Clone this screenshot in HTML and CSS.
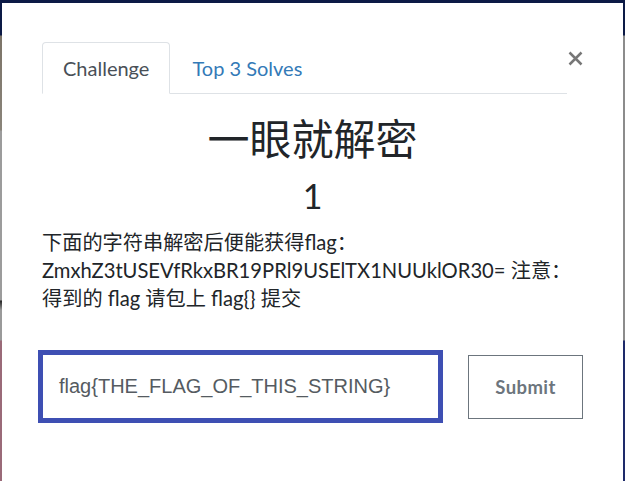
FILE: index.html
```html
<!DOCTYPE html>
<html lang="zh">
<head>
<meta charset="utf-8">
<title>Challenge</title>
<link rel="stylesheet" href="styles.css">
</head>
<body>
<div class="backdrop">
  <div class="modal">
    <div class="modal-body">
      <div class="tab-row">
        <ul class="nav-tabs">
          <li class="tab active">Challenge</li>
          <li class="tab link">Top 3 Solves</li>
        </ul>
        <button class="close" aria-label="Close">
          <svg width="15" height="15" viewBox="0 0 15 15"><path d="M1.5 1.5 L13.5 13.5 M13.5 1.5 L1.5 13.5" stroke="#777" stroke-width="2.5" stroke-linecap="butt"/></svg>
        </button>
      </div>
      <h2 class="name">一眼就解密</h2>
      <h3 class="value">1</h3>
      <div class="desc">下面的字符串解密后便能获得flag：<br>ZmxhZ3tUSEVfRkxBR19PRl9USElTX1NUUklOR30= 注意：<br>得到的 flag 请包上 flag{} 提交</div>
      <div class="submit-row">
        <div class="answer">flag{THE_FLAG_OF_THIS_STRING}</div>
        <button class="submit">Submit</button>
      </div>
    </div>
  </div>
</div>
</body>
</html>
```
FILE: styles.css
```css
html, body {
  margin: 0;
  padding: 0;
  height: 100%;
}
body {
  background: #0d1a45;
  font-family: "Lato", "Noto Sans CJK SC", sans-serif;
  overflow: hidden;
}
.backdrop {
  height: 100%;
  box-sizing: border-box;
  padding: 3px 2px 0 2px;
  background:
    linear-gradient(to bottom, #0c1a46 0, #0c1a46 35px, #7c7468 36px, #8a847a 130px, #9c9c9c 131px, #9c9c9c 300px, #262626 301px, #9a9a9a 310px, #9a9a9a 340px, #9a6a78 341px, #9a6a78 481px) left top / 2px 100% no-repeat,
    linear-gradient(to bottom, #0c1a46 0, #0c1a46 35px, #8c8c8c 36px, #8c8c8c 340px, #1e2a6a 341px, #1e2a6a 481px) right top / 2px 100% no-repeat,
    #0c1a46;
}
.modal {
  background: #fff;
  height: 100%;
}
.modal-body {
  padding: 39px 40px 0 40px;
}
.tab-row {
  display: flex;
  align-items: flex-start;
}
.nav-tabs {
  list-style: none;
  margin: 0;
  padding: 0;
  display: flex;
  width: 527px;
  border-bottom: 1px solid #dee2e6;
}
.tab {
  font-size: 20px;
  line-height: 50px;
  padding: 0 20px;
  border: 1px solid transparent;
  border-top-left-radius: 4px;
  border-top-right-radius: 4px;
  margin-bottom: -1px;
}
.tab.active {
  color: #495057;
  border-color: #dee2e6 #dee2e6 #fff;
  background: #fff;
}
.tab.link {
  color: #337ab7;
  padding-left: 21px;
}
.close {
  background: none;
  border: 0;
  padding: 0;
  margin: 9px 0 0 1px;
  width: 15px;
  height: 15px;
  display: flex;
}
.name {
  margin: 20px 0 0 0;
  text-align: center;
  font-size: 42px;
  line-height: 50px;
  font-weight: 400;
  color: #212529;
}
.value {
  margin: 12px 0 0 0;
  text-align: center;
  font-size: 34px;
  line-height: 40px;
  font-weight: 400;
  color: #212529;
}
.desc {
  margin-top: 12px;
  font-size: 20.2px;
  line-height: 28px;
  color: #212529;
}
.submit-row {
  display: flex;
  align-items: center;
  justify-content: space-between;
  margin-top: 38px;
  width: 545px;
  margin-left: -4px;
}
.answer {
  box-sizing: border-box;
  width: 405px;
  height: 73px;
  border: 5px solid #3e4fb3;
  padding: 0 16px;
  display: flex;
  align-items: center;
  font-family: "Liberation Sans", Arial, sans-serif;
  font-size: 20px;
  color: #555b61;
}
.submit {
  box-sizing: border-box;
  width: 115px;
  height: 64px;
  background: #fff;
  border: 1px solid #6c757d;
  color: #6c757d;
  font-family: "Lato", sans-serif;
  font-weight: 700;
  font-size: 18.5px;
  letter-spacing: 0.4px;
}
```
